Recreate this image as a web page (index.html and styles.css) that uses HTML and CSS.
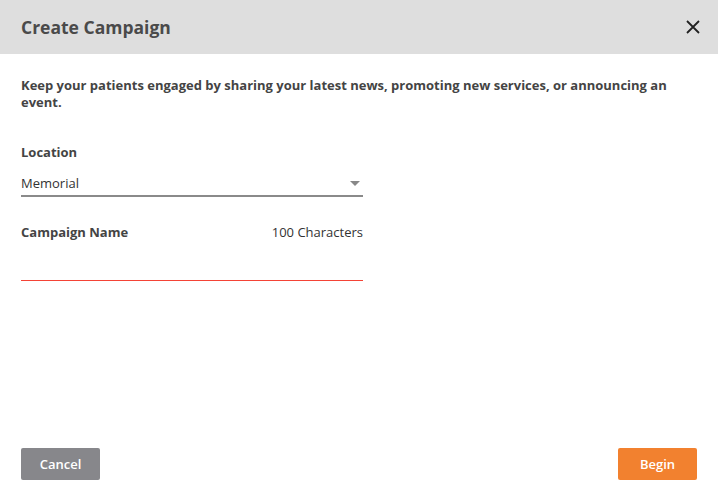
FILE: index.html
```html
<!DOCTYPE html>
<html lang="en">
<head>
  <meta charset="UTF-8">
  <meta name="viewport" content="width=device-width, initial-scale=1.0">
  <title>Create Campaign</title>

  <link rel="stylesheet" href="styles.css">
</head>

<body>
  <div class="modal">
    <header class="modal-header">
      <h2>Create Campaign</h2>
      <button class="close" aria-label="Close">
        <svg width="14" height="14" viewBox="0 0 14 14">
          <path d="M1 1 L13 13 M13 1 L1 13" stroke="#222" stroke-width="1.8" fill="none"/>
        </svg>
      </button>
    </header>

    <div class="modal-body">
      <p class="intro">Keep your patients engaged by sharing your latest news, promoting new services, or announcing an event.</p>

      <div class="field">
        <label>Location</label>
        <div class="select">
          <span>Memorial</span>
          <span class="caret"></span>
        </div>
      </div>

      <div class="field">
        <div class="field-head">
          <label>Campaign Name</label>
          <span class="count">100 Characters</span>
        </div>
        <div class="text-input"></div>
        <div class="error-line"></div>
      </div>
    </div>

    <footer class="actions">
      <button class="btn btn-cancel">Cancel</button>
      <button class="btn btn-begin">Begin</button>
    </footer>
  </div>
</body>
</html>
```

FILE: styles.css
```css
/* Resets */
* {
  box-sizing: border-box;
  margin: 0;
  padding: 0;
}

body {
  font-family: "Open Sans", "Liberation Sans", sans-serif;
  color: #4a4a4a;
  background: #fff;
}

.modal {
  height: 500px;
  display: grid;
  grid-template-rows: 54px 1fr min-content;
}

/* Header */
.modal-header {
  background: #dedede;
  display: flex;
  align-items: center;
  justify-content: space-between;
  padding: 0 14px 0 21px;

  & h2 {
    font-size: 17.5px;
    font-weight: 700;
    color: #4a4a4a;
  }
}

.close {
  border: 0;
  background: none;
  width: 22px;
  height: 22px;
  display: flex;
  align-items: center;
  justify-content: center;
}

/* Body */
.modal-body {
  padding: 23px 21px 0;
}

.intro {
  font-size: 13px;
  font-weight: 700;
  line-height: 17px;
  color: #444;
  margin-bottom: 29px;
}

.field {
  width: 342px;
  margin-bottom: 26px;

  & label {
    font-size: 13px;
    font-weight: 700;
    color: #444;
  }
}

.select {
  margin-top: 12px;
  display: flex;
  align-items: center;
  justify-content: space-between;
  font-size: 13px;
  color: #333;
  padding: 0 3px 3px 0;
  border-bottom: 2px solid #8a8a8a;
}

.caret {
  width: 0;
  height: 0;
  border-left: 5px solid transparent;
  border-right: 5px solid transparent;
  border-top: 5px solid #888;
}

.field-head {
  display: flex;
  justify-content: space-between;
  align-items: baseline;
}

.count {
  font-size: 13px;
  color: #333;
}

.text-input {
  height: 39px;
}

.error-line {
  height: 1px;
  background-color: #f44336;
}

/* Buttons */
.actions {
  display: flex;
  justify-content: space-between;
  padding: 0 21px 20px;
}

.btn {
  width: 79px;
  height: 32px;
  border: 0;
  border-radius: 2px;
  color: #fff;
  font-family: inherit;
  font-size: 13px;
  font-weight: 600;
}

.btn-cancel {
  background: #87878b;
}

.btn-begin {
  background: #f2812f;
}
```
